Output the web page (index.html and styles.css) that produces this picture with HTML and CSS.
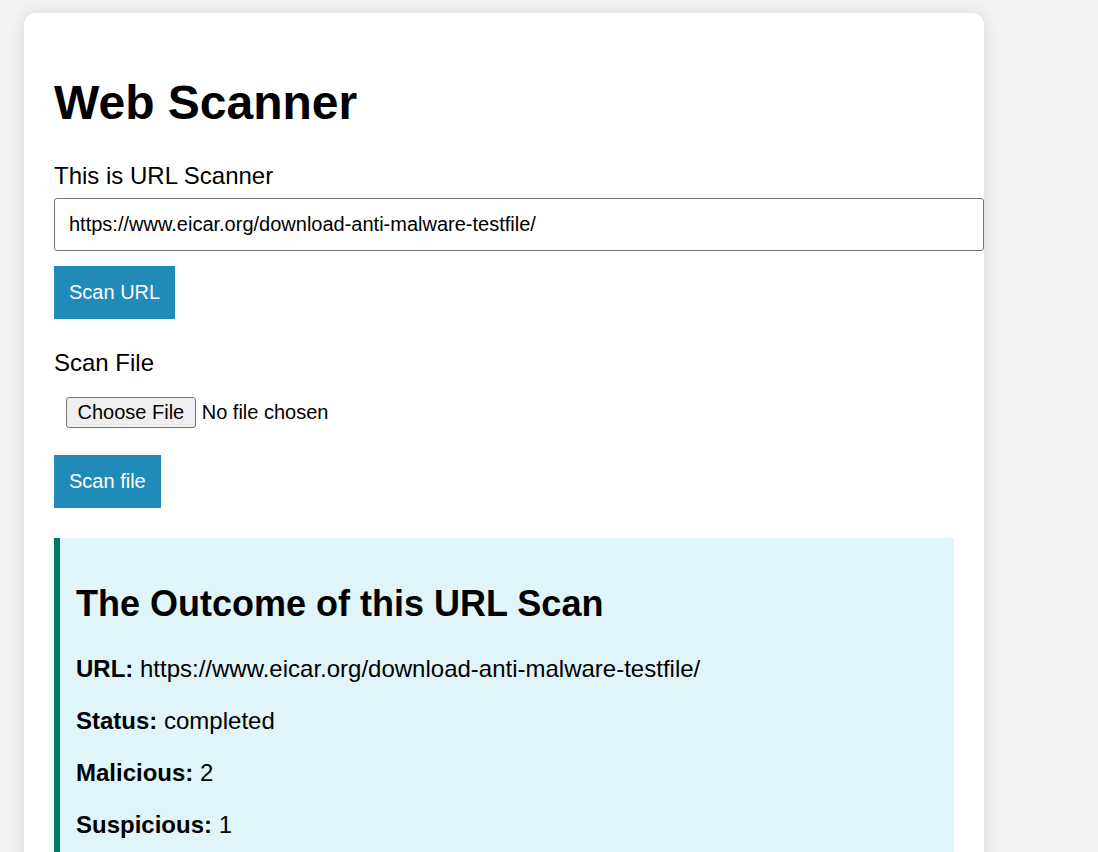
FILE: index.html
```html
<!DOCTYPE html>
<html lang="en">
<head>
<meta charset="utf-8">
<title>Web Scanner</title>
<link rel="stylesheet" href="styles.css">
</head>
<body>
  <div class="card">
    <h1 class="title">Web Scanner</h1>
    <form class="scan-form">
      <label class="field-label" for="url">This is URL Scanner</label>
      <input class="url-input" id="url" type="text" value="https://www.eicar.org/download-anti-malware-testfile/">
      <button class="btn" type="button">Scan URL</button>
    </form>
    <form class="scan-form">
      <label class="field-label" for="file">Scan File</label>
      <input class="file-input" id="file" type="file">
      <button class="btn" type="button">Scan file</button>
    </form>
    <div class="result">
      <h2 class="result-title">The Outcome of this URL Scan</h2>
      <p class="result-line"><strong>URL:</strong> https://www.eicar.org/download-anti-malware-testfile/</p>
      <p class="result-line"><strong>Status:</strong> completed</p>
      <p class="result-line"><strong>Malicious:</strong> 2</p>
      <p class="result-line"><strong>Suspicious:</strong> 1</p>
    </div>
  </div>
</body>
</html>
```

FILE: styles.css
```css
html, body {
  margin: 0;
  padding: 0;
}

body {
  background: #f2f2f2;
  font-family: "Liberation Sans", Arial, sans-serif;
  font-size: 24px;
  color: #000;
  padding: 13px 24px;
}

.card {
  width: 900px;
  padding: 30px;
  background: #fff;
  border-radius: 12px;
  box-shadow: 0 0 15px rgba(0, 0, 0, 0.1);
}

.title {
  font-size: 48px;
  font-weight: bold;
  margin: 32px 0;
  line-height: normal;
}

.scan-form {
  display: flex;
  flex-direction: column;
  align-items: flex-start;
  margin-bottom: 30px;
}

.field-label {
  display: block;
  font-size: 24px;
  margin-bottom: 8px;
}

.url-input {
  width: 100%;
  padding: 14px;
  font-family: "Liberation Sans", Arial, sans-serif;
  font-size: 20px;
  border: 1px solid #767676;
  border-radius: 3px;
  color: #000;
  margin: 0 0 15px;
}

.file-input {
  font-family: "Liberation Sans", Arial, sans-serif;
  font-size: 20px;
  padding: 12px;
  margin: 0 0 15px;
  line-height: 31px;
}

.file-input::file-selector-button {
  font-family: "Liberation Sans", Arial, sans-serif;
  font-size: 20px;
  height: 31px;
  padding: 0 10.5px;
  margin: 0 6px 0 0;
  border: 1px solid #767676;
  border-radius: 3px;
  background: #efefef;
  color: #000;
}

.btn {
  background: #208bb9;
  color: #fff;
  border: none;
  padding: 15px;
  font-family: "Liberation Sans", Arial, sans-serif;
  font-size: 20px;
  line-height: 23px;
  cursor: pointer;
}

.result {
  background: #e0f5fa;
  border-left: 6px solid #00796b;
  padding: 15px 15px 15px 16px;
}

.result-title {
  font-size: 36px;
  margin: 30px 0;
}

.result-line {
  margin: 24px 0;
}
```
